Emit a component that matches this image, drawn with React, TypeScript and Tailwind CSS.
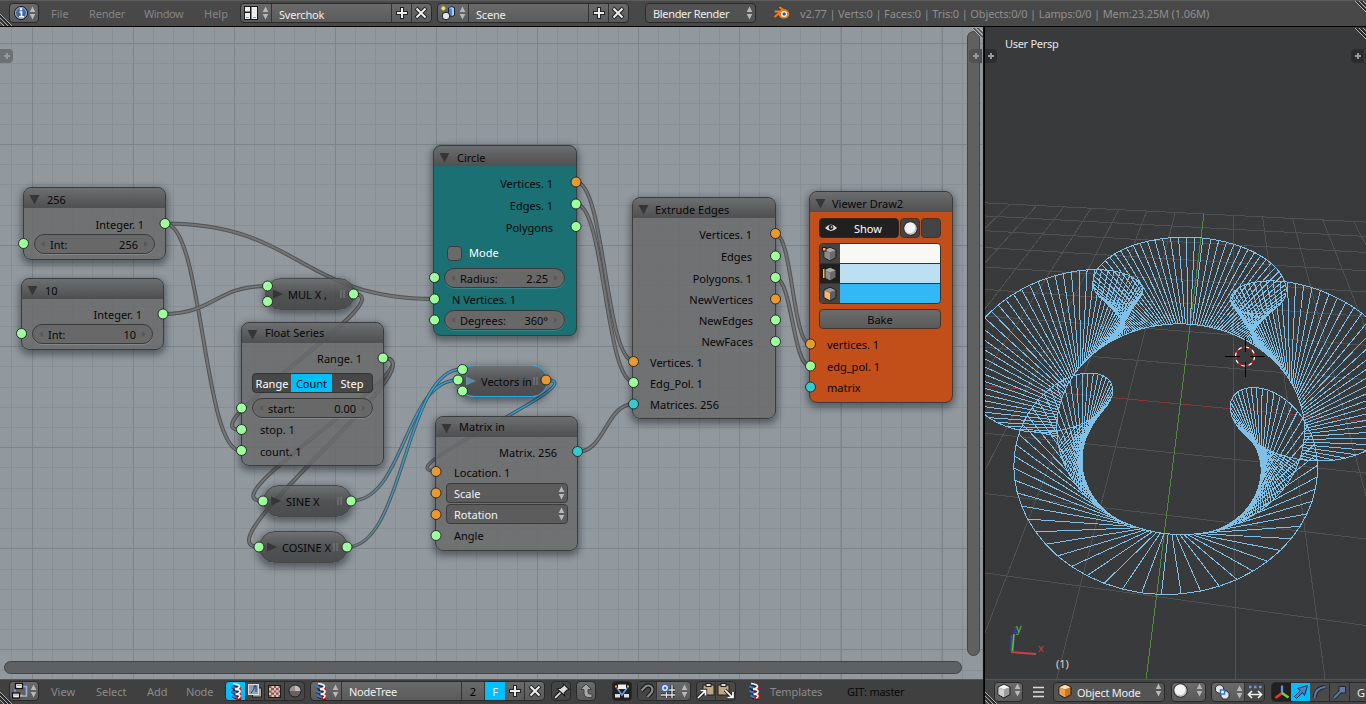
import React from "react";

type Pt = [number, number];

/* ---------- 3D scene ---------- */

const project = (u: number, v: number, z = 0): Pt => {
  const w = 1 - 0.012 * u + 0.1057 * v - 0.1091 * z;
  return [
    (1180.3 + 39 * u + 130.2 * v - 129.3 * z) / w,
    (404 + 0.133 * u - 1.137 * v - 76.1 * z) / w,
  ];
};

const seg = (a: Pt, b: Pt) =>
  `M${a[0].toFixed(1)} ${a[1].toFixed(1)}L${b[0].toFixed(1)} ${b[1].toFixed(1)}`;

const HALF = 8;
const floorLines = Array.from({ length: 17 }, (_, i) => i - HALF)
  .filter((i) => i !== 0)
  .map((i) => seg(project(i, -HALF), project(i, HALF)) + seg(project(-HALF, i), project(HALF, i)))
  .join("");

const COUNT = 256;
const inner: Pt[] = [];
const outer: Pt[] = [];
for (let i = 0; i < COUNT; i++) {
  const a = (2 * Math.PI * i) / COUNT;
  const t = (10 * Math.PI * i) / COUNT;
  const x = 2.25 * Math.cos(a);
  const y = 2.25 * Math.sin(a);
  inner.push(project(x, y));
  outer.push(project(x + Math.cos(t), y + Math.sin(t), 1.62));
}
const poly = (p: Pt[]) => "M" + p.map((q) => `${q[0].toFixed(1)} ${q[1].toFixed(1)}`).join("L") + "Z";
const meshPath = poly(inner) + poly(outer) + inner.map((p, i) => seg(p, outer[i])).join("");

function Viewport3D() {
  return (
    <div className="relative min-h-0 flex-1 overflow-hidden bg-[#393a3b]">
      <svg className="block h-full w-full" viewBox="985 27 381 652" preserveAspectRatio="xMinYMin slice" fill="none">
        <g shapeRendering="crispEdges" strokeWidth="1">
          <path d={floorLines} stroke="#505152" />
          <path d={seg(project(-HALF, 0), project(HALF, 0))} stroke="#86393a" />
          <path d={seg(project(0, -HALF), project(0, HALF))} stroke="#4f8b3d" />
          <path d={meshPath} stroke="#80c0e6" />
        </g>
        <circle cx="1245" cy="356.500" r="9.500" stroke="#ff1010" strokeWidth="1.200" />
        <circle cx="1245" cy="356.500" r="9.500" stroke="#fff" strokeWidth="1.200" strokeDasharray="3.700 3.760" />
        <path d="M1225 356.500h15M1250 356.500h15M1245.500 337v15M1245.500 362v15" stroke="#000" />
        <path d="M1011.500 652V635" stroke="#3e3ecb" strokeWidth="2" />
        <path d="M1012.500 651L1014 634" stroke="#5abf3f" strokeWidth="1.700" />
        <path d="M1011 652L1036 654" stroke="#cc4040" strokeWidth="2" />
      </svg>
      <span className="absolute left-[20px] top-[9px] text-[11px] leading-4 tracking-[-0.3px] text-[#e8e8e8]">User Persp</span>
      <span className="absolute left-[71px] top-[629px] text-[11px] leading-4 text-[#d8d8d8]">(1)</span>
      <span className="absolute left-[28px] top-[594px] text-[11px] leading-4 text-[#3e3ecb]">z</span>
      <span className="absolute left-[31px] top-[593px] text-[11px] leading-4 text-[#5abf3f]">y</span>
      <span className="absolute left-[53px] top-[613px] text-[11px] leading-4 text-[#c04242]">x</span>
      <PlusTab className="-left-px top-[22px] rounded-r bg-[#2b2c2d]" />
      <PlusTab className="right-[2px] top-[22px] rounded-l bg-[#2b2c2d]" />
      <TopCorner />
    </div>
  );
}

/* ---------- small parts ---------- */

function PlusTab({ className }: { className: string }) {
  return (
    <div className={`absolute flex h-[14px] w-[13px] items-center justify-center ${className}`}>
      <svg width="8" height="8" viewBox="0 0 8 8">
        <path d="M4 1v6M1 4h6" stroke="#97999c" strokeWidth="2" />
      </svg>
    </div>
  );
}

function UpDown({ className = "" }: { className?: string }) {
  return (
    <svg width="7" height="14" viewBox="0 0 7 14" className={`shrink-0 ${className}`}>
      <path d="M3.500 0.500L6.300 6H.700zM3.500 13.500L6.300 8H.700z" fill="#b8b8b8" />
    </svg>
  );
}

function Plus() {
  return (
    <svg width="14" height="14" viewBox="0 0 14 14">
      <path d="M7 1v12M1 7h12" stroke="#222" strokeWidth="4" />
      <path d="M7 2v10M2 7h10" stroke="#eee" strokeWidth="2" />
    </svg>
  );
}

function Cross() {
  return (
    <svg width="14" height="14" viewBox="0 0 14 14">
      <path d="M2 2l10 10M12 2L2 12" stroke="#222" strokeWidth="4" />
      <path d="M2.500 2.500l9 9M11.500 2.500l-9 9" stroke="#eee" strokeWidth="2" />
    </svg>
  );
}

function Group({ className, children }: { className: string; children: React.ReactNode }) {
  return (
    <div className={`flex h-5 shrink-0 items-stretch overflow-hidden rounded-[4px] border border-[#2a2a2a] bg-gradient-to-b from-[#6a6a6a] to-[#5a5a5a] text-[#eee] ${className}`}>
      {children}
    </div>
  );
}

const cell = "flex shrink-0 items-center justify-center";

function Corner() {
  return (
    <svg className="absolute bottom-0 left-0" width="13" height="13" viewBox="0 0 13 13">
      <path d="M0 1l12 12M0 5l8 8M0 9l4 4" stroke="#aaa" strokeWidth="1" />
      <path d="M0 2.500L10.500 13M0 6.500L6.500 13" stroke="#111" strokeWidth="1" />
    </svg>
  );
}

function TopCorner() {
  return (
    <svg className="absolute right-0 top-px" width="12" height="12" viewBox="0 0 12 12">
      <path d="M1 0l11 11M5 0l7 7M9 0l3 3" stroke="#b5b5b5" strokeWidth="1" />
      <path d="M2.500 0L12 9.500M6.500 0L12 5.500" stroke="#151515" strokeWidth="1" />
    </svg>
  );
}

function NodeIcon() {
  return (
    <svg width="20" height="18" viewBox="0 0 20 18" className="shrink-0">
      <path d="M5 9.500v-2M12 4.500h4.500V14H10" fill="none" stroke="#8eb2ea" strokeWidth="1.600" />
      <rect x="5.500" y="1.500" width="7" height="5" fill="#f2f2f2" stroke="#111" strokeWidth="1.300" />
      <rect x="2.500" y="11" width="7" height="5" fill="#f2f2f2" stroke="#111" strokeWidth="1.300" />
      <path d="M7 3.500h4M4 13h4" stroke="#999" />
      <circle cx="11.500" cy="13.500" r="1.200" fill="#f0b040" />
    </svg>
  );
}

function Helix() {
  return (
    <svg width="14" height="18" viewBox="0 0 14 18" className="shrink-0">
      <path d="M3.500 4.500q3.500 2.500 8 2M3 9q4 2.500 8.500 2.500M4 14q4 2 8 2" stroke="#1c1c1c" strokeWidth="4" fill="none" />
      <path d="M7 6.500q2 .5 5 0M7 11.300q2 .7 5 .2M7 16h5.500" stroke="#d81818" strokeWidth="2.600" fill="none" />
      <path d="M2.500 4.200q2 1.800 5 1.800M2.500 8.800q2 1.800 5 1.800M3.500 13.500q2 1.500 4 1.500" stroke="#3a78cc" strokeWidth="2.400" fill="none" />
      <path d="M4 1.500q7 1 6.500 3T6 7.500M6 6.800q5.500 1 5 3T6.500 12.500M6.500 11.800q5 1 4.500 2.500T9 16" fill="none" stroke="#f0f0f0" strokeWidth="1.700" />
    </svg>
  );
}

function Ball() {
  return (
    <svg width="15" height="15" viewBox="0 0 15 15" className="shrink-0">
      <circle cx="7.500" cy="7.500" r="6.800" fill="#c4c4c4" stroke="#262626" />
      <circle cx="7" cy="6.700" r="5.300" fill="#f4f4f4" />
    </svg>
  );
}

function Cube({ front = "#cfcfcf", top = "#f4f4f4", side = "#9c9c9c", mark }: { front?: string; top?: string; side?: string; mark?: "vertex" | "edge" }) {
  return (
    <svg width="16" height="16" viewBox="0 0 16 16" className="shrink-0">
      <path d="M2 4L8 1.200l6 2.800v7.500L8 15l-6-3.500z" fill={side} stroke="#1c1c1c" />
      <path d="M2.500 4.300L8 1.800l5.500 2.500L8 6.300z" fill={top} />
      <path d="M2.500 4.800L8 6.800v7.500l-5.500-3.100z" fill={front} />
      {mark === "vertex" && <rect x=".5" y="1.500" width="3.500" height="3.500" fill="#ffb060" stroke="#2a1a08" />}
      {mark === "edge" && <rect x=".5" y="2.500" width="2.500" height="10" fill="#ffb060" stroke="#2a1a08" />}
    </svg>
  );
}

/* ---------- top header ---------- */

function InfoHeader() {
  return (
    <header className="relative flex h-[27px] shrink-0 items-start border-b border-black bg-[#484848] pt-[3px] shadow-[inset_0_1px_0_#5c5c5c]">
      <Corner />
      <TopCorner />
      <Group className="ml-[9px] w-[30px] items-center">
        <div className={`${cell} w-[22px]`}>
          <svg width="16" height="16" viewBox="0 0 16 16">
            <circle cx="8" cy="8" r="6.500" fill="#44699f" stroke="#10151f" />
            <circle cx="8" cy="8" r="5.500" fill="none" stroke="#b9c8e2" strokeWidth=".8" />
            <path d="M6.500 7h2v4.500M6 11.800h5" stroke="#fff" strokeWidth="1.600" fill="none" />
            <circle cx="8" cy="4.300" r="1.200" fill="#fff" />
          </svg>
        </div>
        <UpDown className="-ml-[3px] self-center" />
      </Group>
      <nav className="flex pl-[12px] leading-[22px] text-[#858585]">
        <span className="w-[38px]">File</span>
        <span className="w-[55px] tracking-[-0.2px]">Render</span>
        <span className="w-[60px] tracking-[-0.4px]">Window</span>
        <span className="w-[36px]">Help</span>
      </nav>
      <Group className="w-[192px]">
        <div className={`${cell} w-[31px] gap-[3px] border-r border-[#333]`}>
          <svg width="16" height="16" viewBox="0 0 16 16" className="shrink-0">
            <path d="M1 1h14v14H1z" fill="#181818" />
            <path d="M2 2h5v4.500H2zM2 8h5v6H2zM8.500 2H14v12H8.500z" fill="#eee" />
            <path d="M3 12.500h3M10 12.500h3" stroke="#999" />
          </svg>
          <UpDown />
        </div>
        <span className="w-[120px] border-r border-[#333] pl-[7px] leading-[21px] tracking-[-0.2px]">Sverchok</span>
        <div className={`${cell} w-[20px] border-r border-[#333]`}><Plus /></div>
        <div className={`${cell} w-[18px]`}><Cross /></div>
      </Group>
      <Group className="ml-[5px] w-[192px]">
        <div className={`${cell} w-[31px] gap-[3px] border-r border-[#333]`}>
          <svg width="16" height="16" viewBox="0 0 16 16" className="shrink-0">
            <path d="M8.500 3l3-1.500 3 1v8l-3 1-3-1z" fill="#4f86d0" stroke="#142440" />
            <path d="M9 3l2.500-.8 2.500.8v7l-2 .8V4z" fill="#b4ccf2" />
            <circle cx="6" cy="11" r="3.800" fill="#e6e6e6" stroke="#1a1a1a" />
            <circle cx="3.300" cy="3.300" r="2.200" fill="#e8e48a" stroke="#8f8a2a" strokeWidth=".8" />
          </svg>
          <UpDown />
        </div>
        <span className="w-[120px] border-r border-[#333] pl-[7px] leading-[21px] tracking-[-0.2px]">Scene</span>
        <div className={`${cell} w-[20px] border-r border-[#333]`}><Plus /></div>
        <div className={`${cell} w-[18px]`}><Cross /></div>
      </Group>
      <Group className="ml-[16px] w-[111px] items-center justify-between bg-none bg-[#525252] pl-[7px] pr-[2px]">
        <span className="leading-[20px] tracking-[-0.33px]">Blender Render</span>
        <UpDown className="self-center" />
      </Group>
      <svg className="ml-[18px] mt-[2px] shrink-0" width="16" height="16" viewBox="0 0 16 16">
        <path d="M1 11.500L8 6M1.500 6.500H8M6 2.500l6 4.500" stroke="#ef7f1a" strokeWidth="2" strokeLinecap="round" />
        <ellipse cx="10" cy="9" rx="5.300" ry="4.700" fill="#ef7f1a" />
        <circle cx="10" cy="9" r="3" fill="#fff" />
        <circle cx="10.200" cy="9" r="1.700" fill="#265a9c" />
      </svg>
      <span className="ml-[10px] whitespace-nowrap leading-[22px] tracking-[-0.138px] text-[#8f8f8f]">
        v2.77 | Verts:0 | Faces:0 | Tris:0 | Objects:0/0 | Lamps:0/0 | Mem:23.25M (1.06M)
      </span>
    </header>
  );
}

/* ---------- node editor ---------- */

const ruler = (start: number, step: number, end: number) => {
  const out: number[] = [];
  for (let p = start; p < end; p += step) out.push(Math.floor(p) + 0.5);
  return out;
};
const minorPath =
  ruler(11.8, 20.22, 984).map((x) => `M${x} 27V679`).join("") +
  ruler(43.3, 20.22, 679).map((y) => `M0 ${y}H984`).join("");
const majorPath =
  ruler(32.2, 101.1, 984).map((x) => `M${x} 27V679`).join("") +
  ruler(43.3, 101.1, 679).map((y) => `M0 ${y}H984`).join("");

const curve = (a: Pt, b: Pt) => {
  const h = Math.abs(b[0] - a[0]) / 2;
  return `M${a[0]} ${a[1]}C${a[0] + h} ${a[1]} ${b[0] - h} ${b[1]} ${b[0]} ${b[1]}`;
};

const links: { d: string; hot?: string }[] = [
  { d: curve([165, 223.5], [434, 299]) },
  { d: curve([165, 223.5], [241, 451]) },
  { d: curve([163, 314], [267, 286]) },
  { d: curve([353, 294], [241, 430]) },
  { d: curve([383, 358], [263, 501]) },
  { d: curve([383, 358], [259, 547]) },
  { d: curve([576, 182], [634, 361]) },
  { d: curve([576, 204], [634, 382]) },
  { d: curve([577, 452], [634, 404]) },
  { d: curve([775, 234], [810, 344]) },
  { d: curve([775, 278], [810, 366]) },
  { d: curve([351, 501], [458, 380]), hot: "url(#hotIn)" },
  { d: curve([347, 547], [462, 369]), hot: "url(#hotIn)" },
  { d: curve([546, 380], [436, 471]), hot: "url(#hotOut)" },
];

const GREEN = "#9cff9c";
const ORANGE = "#e8992f";
const CYAN = "#33cccc";

const sockets: [number, number, string][] = [
  [165, 223.5, GREEN], [23.5, 243.5, GREEN], [163, 314, GREEN], [21.5, 333.5, GREEN],
  [267.5, 286, GREEN], [267.5, 301.5, GREEN], [353.5, 294, GREEN],
  [383, 358, GREEN], [241.5, 408, GREEN], [241.5, 429.5, GREEN], [241.5, 450.5, GREEN],
  [263, 501, GREEN], [351, 501, GREEN], [259, 547, GREEN], [347, 547, GREEN],
  [576, 182, ORANGE], [576, 204, GREEN], [576, 226.5, GREEN],
  [434.5, 277.5, GREEN], [434.5, 299, GREEN], [434.5, 320, GREEN],
  [462.5, 369.5, GREEN], [458, 380, GREEN], [462.5, 391, GREEN], [546, 380, ORANGE],
  [577.5, 451.5, CYAN], [436, 471.5, ORANGE], [436, 493, ORANGE], [436, 514.5, ORANGE], [436, 535.5, GREEN],
  [775.5, 233.5, ORANGE], [775.5, 256, GREEN], [775.5, 277.5, GREEN],
  [775.5, 299, ORANGE], [775.5, 320, GREEN], [775.5, 341.5, GREEN],
  [633.5, 361.5, ORANGE], [633.5, 382.5, GREEN], [633.5, 404, CYAN],
  [810.5, 344, ORANGE], [810.5, 366, GREEN], [810.5, 387, CYAN],
];

const solidBar = "from-[#6c6d6e] to-[#505051]";
const clearBar = "from-[#6b6c6d]/50 to-[#444445]/75";

function Node({ title, className, bar = clearBar, lead = "leading-[22px]", gap = "ml-[5px]", children }: { title: string; className: string; bar?: string; lead?: string; gap?: string; children: React.ReactNode }) {
  return (
    <section className={`absolute flex flex-col overflow-hidden rounded-[8px] border border-[#3a3c3d] shadow-[0_3px_7px_2px_rgba(20,24,28,.45)] ${className}`}>
      <h2 className={`flex h-[20px] shrink-0 items-start bg-gradient-to-b pl-[5px] ${bar} ${lead}`}>
        <svg className="mr-px mt-[7px] shrink-0" width="11" height="10" viewBox="0 0 11 10">
          <path d="M.500 0h10L5.500 9.500z" fill="#363636" />
        </svg>
        <span className={gap}>{title}</span>
      </h2>
      {children}
    </section>
  );
}

function Pill({ title, className, arrow = "#363636" }: { title: string; className: string; arrow?: string }) {
  return (
    <section className={`absolute flex h-[32px] items-center rounded-[16px] border bg-gradient-to-b from-[#666768]/80 via-[#464647]/85 to-[#444445]/90 shadow-[0_3px_7px_2px_rgba(20,24,28,.45)] ${className}`}>
      <svg className="absolute left-[7px]" width="10" height="10" viewBox="0 0 10 10">
        <path d="M0 .500v9L10 5z" fill={arrow} />
      </svg>
      <span className="whitespace-nowrap pl-[22px] pt-px leading-[14px]">{title}</span>
      <svg className="absolute right-[9px]" width="5" height="8" viewBox="0 0 5 8">
        <path d="M1 0v8M4 0v8" stroke="#808080" />
      </svg>
    </section>
  );
}

function NumberField({ label, value, className }: { label: string; value: string; className: string }) {
  return (
    <div className={`flex h-5 shrink-0 items-center justify-between rounded-full border border-[#3b3b3b] bg-[#686868] px-[6px] shadow-[0_1px_0_rgba(255,255,255,.15)] ${className}`}>
      <svg width="5" height="6" viewBox="0 0 5 6"><path d="M4 0v6L0 3z" fill="#595959" /></svg>
      <span className="ml-[4px] flex-1 pt-px leading-[19px]">{label}</span>
      <span className="mr-[5px] pt-px leading-[19px]">{value}</span>
      <svg width="5" height="6" viewBox="0 0 5 6"><path d="M1 0v6l4-3z" fill="#595959" /></svg>
    </div>
  );
}

function Dropdown({ label, className }: { label: string; className: string }) {
  return (
    <div className={`ml-[10px] mr-[9px] flex h-5 shrink-0 items-center justify-between rounded-[4px] border border-[#3b3b3b] bg-[#5c5c5c] pl-[7px] pr-[2px] text-[#f2f2f2] ${className}`}>
      <span className="pt-px leading-[19px]">{label}</span>
      <UpDown />
    </div>
  );
}

const gray = "bg-[#696a6b]/85";

function NodeCanvas() {
  return (
    <div className="relative min-h-0 flex-1 overflow-hidden bg-[#91999f] text-[#080808]">
      <svg className="absolute left-0 top-0" width="984" height="652" viewBox="0 27 984 652" fill="none">
        <defs>
          <linearGradient id="hotIn" gradientUnits="userSpaceOnUse" x1="350" y1="0" x2="430" y2="0">
            <stop offset="0" stopColor="#747576" />
            <stop offset="1" stopColor="#22a9e4" />
          </linearGradient>
          <linearGradient id="hotOut" gradientUnits="userSpaceOnUse" x1="430" y1="0" x2="530" y2="0">
            <stop offset="0" stopColor="#747576" />
            <stop offset="1" stopColor="#22a9e4" />
          </linearGradient>
        </defs>
        <path d={minorPath} stroke="#878f95" />
        <path d={majorPath} stroke="#7d858b" />
      </svg>

      <LinkLayer />

      <Node title="256" gap="ml-[6px]" lead="leading-[23px]" className={`left-[23px] top-[160px] h-[73px] w-[143px] ${gray}`}>
        <p className="mt-[6px] h-[20px] pr-[21px] text-right leading-[22px]">Integer. 1</p>
        <NumberField label="Int:" value="256" className="mx-[10px]" />
      </Node>
      <Node title="10" gap="ml-[6px]" lead="leading-[23px]" className={`left-[21px] top-[251px] h-[72px] w-[143px] ${gray}`}>
        <p className="mt-[5px] h-[20px] pr-[21px] text-right leading-[22px]">Integer. 1</p>
        <NumberField label="Int:" value="10" className="mx-[10px]" />
      </Node>
      <Pill title="MUL X ," className="left-[265px] top-[251px] w-[90px] border-[#454748]" />
      <Node title="Float Series" lead="leading-[20px]" gap="ml-[6px]" className={`left-[241px] top-[295px] h-[144px] w-[143px] ${gray}`}>
        <p className="mt-[5px] h-[22px] pr-[21px] text-right leading-[21px]">Range. 1</p>
        <div className="mx-[10px] mt-[3px] flex h-5 shrink-0 overflow-hidden rounded-[4px] border border-[#333] bg-[#474747] text-center leading-[20px] text-white">
          <span className="w-[38px]">Range</span>
          <span className="w-[41px] bg-[#00bfff] text-[#050505]">Count</span>
          <span className="w-[40px]">Step</span>
        </div>
        <NumberField label="start:" value="0.00" className="mx-[10px] mt-[5px]" />
        <p className="mt-px h-[22px] pl-[18px] leading-[22px]">stop. 1</p>
        <p className="h-[22px] pl-[18px] leading-[22px]">count. 1</p>
      </Node>
      <Pill title="SINE X" className="left-[263px] top-[458px] w-[89px] border-[#454748]" />
      <Pill title="COSINE X" className="left-[259px] top-[504px] w-[89px] border-[#454748]" />

      <Node title="Circle" bar={solidBar} gap="ml-[6px]" lead="leading-[23px]" className="left-[433px] top-[118px] h-[191px] w-[144px] bg-[#1a7073]">
        <div className="mt-[7px] pr-[23px] text-right leading-[22px]">
          <p>Vertices. 1</p>
          <p>Edges. 1</p>
          <p>Polygons</p>
        </div>
        <label className="flex h-[28px] items-center pl-[13px] leading-[22px] text-white">
          <i className="mr-[7px] h-[15px] w-[15px] rounded-[4px] border border-[#3c3c3c] bg-[#6a6a6a]" />
          Mode
        </label>
        <NumberField label="Radius:" value="2.25" className="ml-[10px] mr-[11px] mt-px" />
        <p className="h-[22px] pl-[18px] leading-[23px]">N Vertices. 1</p>
        <NumberField label="Degrees:" value="360°" className="ml-[10px] mr-[11px]" />
      </Node>
      <Pill title="Vectors in" arrow="#5e8ca0" className="left-[458px] top-[338px] w-[90px] border-[#1fa8ea]" />
      <Node title="Matrix in" lead="leading-[20px]" gap="ml-[6px]" className={`left-[435px] top-[389px] h-[135px] w-[143px] ${gray}`}>
        <p className="mt-[5px] h-[22px] pr-[20px] text-right leading-[21px]">Matrix. 256</p>
        <p className="h-[19px] pl-[18px] leading-[18px]">Location. 1</p>
        <Dropdown label="Scale" className="" />
        <Dropdown label="Rotation" className="mt-px" />
        <p className="mt-px h-[22px] pl-[18px] leading-[22px]">Angle</p>
      </Node>

      <Node title="Extrude Edges" lead="leading-[23px]" className={`left-[632px] top-[170px] h-[222px] w-[144px] ${gray}`}>
        <div className="mt-[6px] pr-[23px] text-right leading-[22px]">
          <p>Vertices. 1</p>
          <p>Edges</p>
          <p>Polygons. 1</p>
        </div>
        <div className="-mt-px pr-[22px] text-right leading-[21px]">
          <p>NewVertices</p>
          <p>NewEdges</p>
          <p>NewFaces</p>
        </div>
        <div className="pl-[17px] leading-[21px]">
          <p>Vertices. 1</p>
          <p>Edg_Pol. 1</p>
          <p>Matrices. 256</p>
        </div>
      </Node>

      <Node title="Viewer Draw2" bar={solidBar} lead="leading-[23px]" className="left-[809px] top-[164px] h-[212px] w-[144px] bg-[#c24e1a]">
        <div className="mx-[9px] mt-[6px] flex h-5 w-[122px] shrink-0 gap-px">
          <div className="flex w-[80px] items-center rounded-[4px] border border-[#3a2418] bg-[#202020] pl-[5px] text-white">
            <svg width="12" height="10" viewBox="0 0 12 10">
              <path d="M0 5q6-7 12 0-6 6-12 0z" fill="#ddd" />
              <circle cx="6" cy="4.500" r="2.400" fill="#222" />
              <circle cx="6.500" cy="4" r=".8" fill="#fff" />
            </svg>
            <span className="pl-[17px] pt-px leading-[19px]">Show</span>
          </div>
          <div className={`${cell} w-[20px] rounded-[4px] border border-[#5a2b14] bg-[#444]`}><Ball /></div>
          <div className="w-[20px] rounded-[4px] border border-[#5a2b14] bg-[#444]" />
        </div>
        <div className="mx-[9px] mt-[5px] flex h-[61px] w-[122px] shrink-0 flex-col overflow-hidden rounded-[4px] border border-[#4a2a1a]">
          <div className="flex h-[20px] border-b border-[#333]">
            <div className={`${cell} w-[20px] bg-[#444]`}><Cube mark="vertex" front="#8c8c8c" top="#aaa" side="#6a6a6a" /></div>
            <div className="flex-1 bg-[#f8f8f4]" />
          </div>
          <div className="flex h-[20px] border-b border-[#333]">
            <div className={`${cell} w-[20px] bg-[#202020]`}><Cube mark="edge" front="#8c8c8c" top="#aaa" side="#6a6a6a" /></div>
            <div className="flex-1 bg-[#bce0f2]" />
          </div>
          <div className="flex h-[19px]">
            <div className={`${cell} w-[20px] bg-[#444]`}><Cube front="#ffb366" top="#999" side="#5e5e5e" /></div>
            <div className="flex-1 bg-[#31b8f5]" />
          </div>
        </div>
        <div className="mx-[9px] mt-[5px] h-5 w-[122px] shrink-0 rounded-[4px] border border-[#4a3226] bg-gradient-to-b from-[#6c6c6c] to-[#5a5a5a] text-center leading-[20px]">Bake</div>
        <div className="mt-[5px] pl-[17px] leading-[22px]">
          <p>vertices. 1</p>
          <p>edg_pol. 1</p>
          <p className="leading-[20px]">matrix</p>
        </div>
      </Node>

      <svg className="absolute left-0 top-0" width="984" height="652" viewBox="0 27 984 652">
        {sockets.map(([x, y, c], i) => (
          <circle key={i} cx={x} cy={y} r="5" fill={c} stroke="#202020" strokeWidth=".9" />
        ))}
      </svg>

      <div className="absolute left-[967px] top-[4px] h-[625px] w-[13px] rounded-full border border-[#444] bg-[#5f6062]" />
      <div className="absolute left-[4px] top-[634px] h-[13px] w-[958px] rounded-full border border-[#444] bg-[#5f6062]" />
      <PlusTab className="left-0 top-[22px] rounded-r bg-[#6c7175]" />
      <PlusTab className="left-[969px] top-[22px] rounded-l bg-[#4f5153]" />
      <TopCorner />
    </div>
  );
}

function LinkLayer() {
  return (
    <svg className="absolute left-0 top-0" width="984" height="652" viewBox="0 27 984 652" fill="none">
      {links.map((l, i) => (
        <g key={i}>
          <path d={l.d} stroke="#505254" strokeWidth={l.hot ? 3.4 : 4} />
          <path d={l.d} stroke={l.hot ?? "#747576"} strokeWidth={l.hot ? 1.6 : 2} />
        </g>
      ))}
    </svg>
  );
}

function NodeHeader() {
  return (
    <footer className="relative flex h-[25px] shrink-0 items-start bg-[#404040] pt-[2px] shadow-[inset_0_1px_0_#555]">
      <Corner />
      <Group className="ml-[9px] w-[30px] items-center">
        <NodeIcon />
        <UpDown className="self-center" />
      </Group>
      <nav className="flex pl-[12px] leading-[22px] text-[#8b8b8b]">
        <span className="w-[45px]">View</span>
        <span className="w-[51px]">Select</span>
        <span className="w-[39px]">Add</span>
        <span className="w-[39px] tracking-[-0.2px]">Node</span>
      </nav>
      <Group className="w-[80px] bg-none bg-[#474747]">
        <div className={`${cell} w-[19px] bg-[#00bfff]`}><Helix /></div>
        <div className={`${cell} w-[20px] border-x border-[#2a2a2a]`}>
          <svg width="16" height="16" viewBox="0 0 16 16">
            <rect x="5.500" y="5" width="9" height="9" fill="#aaa68f" stroke="#222" />
            <rect x="1.500" y="1.500" width="10" height="10" fill="#8ca0be" stroke="#ddd" />
            <path d="M4 10l3-4v-3h2v6" stroke="#26364e" fill="none" />
          </svg>
        </div>
        <div className={`${cell} w-[20px] border-r border-[#2a2a2a]`}>
          <svg width="13" height="13" viewBox="0 0 13 13">
            <rect width="13" height="13" fill="#1c1c1c" />
            <rect x="1" y="1" width="11" height="11" fill="#d6c4c0" />
            <path d="M1 2h2.500M6 2h2M10.500 2H12M3 4.200h3M8 4.200h2.500M1 6.500h2.500M6 6.500h2M10.500 6.500H12M3 8.700h3M8 8.700h2.500M1 11h2.500M6 11h2M10.500 11H12" stroke="#9a5048" strokeWidth="2.200" />
          </svg>
        </div>
        <div className={`${cell} w-[19px]`}>
          <svg width="14" height="14" viewBox="0 0 14 14">
            <circle cx="7" cy="7" r="6" fill="#6c6060" stroke="#1c1c1c" />
            <path d="M7 7V1.500A5.500 5.500 0 0 1 12.500 7z" fill="#c5b9b2" />
            <path d="M7 7H1.500A5.500 5.500 0 0 1 7 1.500z" fill="#98908c" />
          </svg>
        </div>
      </Group>
      <Group className="ml-[5px] w-[235px]">
        <div className={`${cell} w-[31px] gap-[4px] border-r border-[#333]`}><Helix /><UpDown /></div>
        <span className="w-[120px] border-r border-[#333] pl-[7px] leading-[20px] tracking-[-0.3px]">NodeTree</span>
        <span className="w-[23px] border-r border-[#333] text-center leading-[20px] text-black">2</span>
        <span className="w-[20px] bg-[#00bfff] text-center leading-[20px]">F</span>
        <div className={`${cell} w-[20px] border-r border-[#333]`}><Plus /></div>
        <div className={`${cell} w-[19px]`}><Cross /></div>
      </Group>
      <Group className="ml-[6px] w-[20px] items-center justify-center bg-none bg-[#454545]">
        <svg className="shrink-0 self-center" width="17" height="17" viewBox="0 0 16 16">
          <path d="M7 8.500L1.500 14.500" stroke="#1a1a1a" strokeWidth="3.400" />
          <path d="M10 1l5 5-2 .8-2.500 2.500L11 12 4 5.500l3-.5L9.500 3z" fill="#ddd" stroke="#1a1a1a" />
          <path d="M7 9L2 14" stroke="#ddd" strokeWidth="1.600" />
        </svg>
      </Group>
      <Group className="ml-[5px] w-[20px] items-center justify-center">
        <svg className="self-center" width="16" height="16" viewBox="0 0 16 16">
          <path d="M8 1L2.500 6.500H6V10.500q0 4 4 4h4v-3.500h-2.500q-1.500 0-1.500-1.500v-3H13.500z" fill="#a8a8a8" stroke="#404040" />
        </svg>
      </Group>
      <Group className="ml-[16px] w-[20px] items-center justify-center bg-none bg-[#1f1f1f]">
        <svg className="self-center" width="16" height="16" viewBox="0 0 16 16">
          <path d="M3 5l5 7 5-7" stroke="#6c9ae0" strokeWidth="1.600" fill="none" />
          <rect x="4" y="1.500" width="8" height="4.500" fill="#eee" />
          <rect x="1" y="11" width="5" height="3.500" fill="#ddd" />
          <rect x="10" y="11" width="5" height="3.500" fill="#ddd" />
          <path d="M1 3.500h2M13 3.500h2" stroke="#e0a848" strokeWidth="2" />
        </svg>
      </Group>
      <Group className="ml-[5px] w-[54px]">
        <div className={`${cell} w-[19px] border-r border-[#333] bg-[#454545]`}>
          <svg width="16" height="16" viewBox="0 0 16 16">
            <path d="M2.500 7.500l4-4q3-2 5.500 0t.500 6l-4 4.500" fill="none" stroke="#181818" strokeWidth="4.200" />
            <path d="M2.500 7.500l4-4q3-2 5.500 0t.500 6l-4 4.500" fill="none" stroke="#8a8a8a" strokeWidth="2.200" />
          </svg>
        </div>
        <div className={`${cell} w-[33px] gap-[5px]`}>
          <svg width="16" height="16" viewBox="0 0 16 16" className="shrink-0">
            <path d="M12 2v13M6.500 8v7M1 7h14M1 12h14" stroke="#1c1c1c" strokeWidth="2.800" />
            <path d="M12 2v13M6.500 8v7M1 7h14M1 12h14" stroke="#e4e4e4" strokeWidth="1.400" />
            <circle cx="5" cy="5" r="3.700" fill="#eee" stroke="#3869b5" strokeWidth="1.600" />
            <circle cx="5" cy="5" r="1.500" fill="#3869b5" />
          </svg>
          <UpDown />
        </div>
      </Group>
      <Group className="ml-[5px] w-[40px] bg-none bg-[#4a4a4a]">
        <div className={`${cell} w-[19px] border-r border-[#333]`}>
          <svg width="18" height="18" viewBox="0 0 18 18">
            <rect x="6" y="3" width="11" height="10" fill="#bda884" stroke="#221c12" />
            <rect x="9" y="1.500" width="5" height="3" fill="#ddd" stroke="#222" />
            <path d="M1 16l7-7M3.500 8.500H8.500V13.500" stroke="#222" strokeWidth="3.400" fill="none" />
            <path d="M1 16l7-7M3.500 8.500H8.500V13.500" stroke="#fff" strokeWidth="1.700" fill="none" />
          </svg>
        </div>
        <div className={`${cell} w-[19px]`}>
          <svg width="18" height="18" viewBox="0 0 18 18">
            <rect x="1" y="3" width="11" height="10" fill="#bda884" stroke="#221c12" />
            <rect x="4" y="1.500" width="5" height="3" fill="#ddd" stroke="#222" />
            <path d="M8 8l7 7M10.500 15.500H16V10" stroke="#222" strokeWidth="3.400" fill="none" />
            <path d="M8 8l7 7M10.500 15.500H16V10" stroke="#fff" strokeWidth="1.700" fill="none" />
          </svg>
        </div>
      </Group>
      <div className="ml-[11px] mt-px"><Helix /></div>
      <span className="ml-[9px] w-[77px] leading-[22px] tracking-[-0.1px] text-[#8b8b8b]">Templates</span>
      <span className="leading-[22px] tracking-[-0.25px] text-[#0a0a0a]">GIT: master</span>
    </footer>
  );
}

function ViewHeader() {
  return (
    <footer className="relative flex h-[25px] shrink-0 items-start overflow-hidden bg-[#444] pt-[3px] shadow-[inset_0_1px_0_#555]">
      <Corner />
      <Group className="ml-[9px] w-[29px] items-center justify-center gap-[2px]">
        <Cube />
        <UpDown />
      </Group>
      <svg className="ml-[9px] mt-[4px] shrink-0" width="13" height="12" viewBox="0 0 13 12">
        <path d="M1 1.500h11M1 6h11M1 10.500h11" stroke="#ddd" strokeWidth="1.500" />
      </svg>
      <Group className="ml-[8px] w-[112px] items-center bg-none bg-[#545454] pl-[3px] pr-[2px]">
        <Cube front="#f0a050" top="#ffe0b8" side="#c87820" />
        <span className="flex-1 pl-[4px] leading-[20px] tracking-[-0.25px]">Object Mode</span>
        <UpDown />
      </Group>
      <Group className="ml-[6px] w-[35px] items-center justify-end gap-[8px] pr-[2px]">
        <Ball />
        <UpDown />
      </Group>
      <Group className="ml-[5px] w-[54px] items-center">
        <div className={`${cell} w-[33px] gap-[6px] self-stretch border-r border-[#333]`}>
          <svg width="16" height="16" viewBox="0 0 16 16" className="shrink-0">
            <circle cx="5.500" cy="5" r="4.200" fill="#e4e4e4" stroke="#222" />
            <circle cx="11" cy="11" r="4.200" fill="#e4e4e4" stroke="#222" />
            <rect x="6.500" y="6" width="4" height="4" fill="#fff" stroke="#2c6fd0" strokeWidth="1.400" />
          </svg>
          <UpDown />
        </div>
        <div className={`${cell} w-[19px] self-stretch bg-[#484848]`}>
          <svg width="16" height="16" viewBox="0 0 16 16">
            <path d="M2 3h2.500M7 3h2.500M12 3h2.500" stroke="#6c9ae0" strokeWidth="2.500" />
            <path d="M1.500 10.500h13M5 7l-3.500 3.500L5 14M11 7l3.500 3.500L11 14" stroke="#eee" strokeWidth="1.700" fill="none" />
          </svg>
        </div>
      </Group>
      <Group className="ml-[6px] w-[120px] bg-none bg-[#4a4a4a]">
        <div className={`${cell} w-[19px] bg-[#202020]`}>
          <svg width="16" height="16" viewBox="0 0 16 16">
            <path d="M8 9V1.500" stroke="#5a96ea" strokeWidth="2.200" />
            <path d="M8 9l-6.500 5" stroke="#e63a2a" strokeWidth="2.600" />
            <path d="M8 9l6.500 4.500" stroke="#7ccf3a" strokeWidth="2.600" />
          </svg>
        </div>
        <div className={`${cell} w-[19px] bg-[#00bfff]`}>
          <svg width="16" height="16" viewBox="0 0 16 16">
            <path d="M1.500 12.500l6-6L4.500 4.500 14.500 1.500l-3 10-2-3-6 6z" fill="#5080c0" stroke="#14294a" />
          </svg>
        </div>
        <div className={`${cell} w-[20px] border-r border-[#2a2a2a]`}>
          <svg width="16" height="16" viewBox="0 0 16 16">
            <path d="M2.500 14Q3 4 13 3" fill="none" stroke="#1a2433" strokeWidth="3.800" />
            <path d="M2.500 14Q3 4 13 3" fill="none" stroke="#607aa2" strokeWidth="2" />
          </svg>
        </div>
        <div className={`${cell} w-[20px] border-r border-[#2a2a2a]`}>
          <svg width="16" height="16" viewBox="0 0 16 16">
            <path d="M2 14l6-6" stroke="#1a2433" strokeWidth="3.800" />
            <rect x="7" y="2.500" width="6.500" height="6.500" fill="#607aa2" stroke="#1a2433" />
            <path d="M2 14l6-6" stroke="#607aa2" strokeWidth="2" />
          </svg>
        </div>
        <span className="pl-[7px] leading-[20px]">G</span>
      </Group>
    </footer>
  );
}

export default function App() {
  return (
    <div className="flex h-[704px] w-[1366px] flex-col overflow-hidden bg-black font-['Noto_Sans','Open_Sans',sans-serif] text-[11px]">
      <InfoHeader />
      <main className="flex min-h-0 flex-1">
        <div className="flex w-[984px] shrink-0 flex-col border-r border-[#111]">
          <NodeCanvas />
          <NodeHeader />
        </div>
        <div className="ml-px flex min-w-0 flex-1 flex-col">
          <Viewport3D />
          <ViewHeader />
        </div>
      </main>
    </div>
  );
}
